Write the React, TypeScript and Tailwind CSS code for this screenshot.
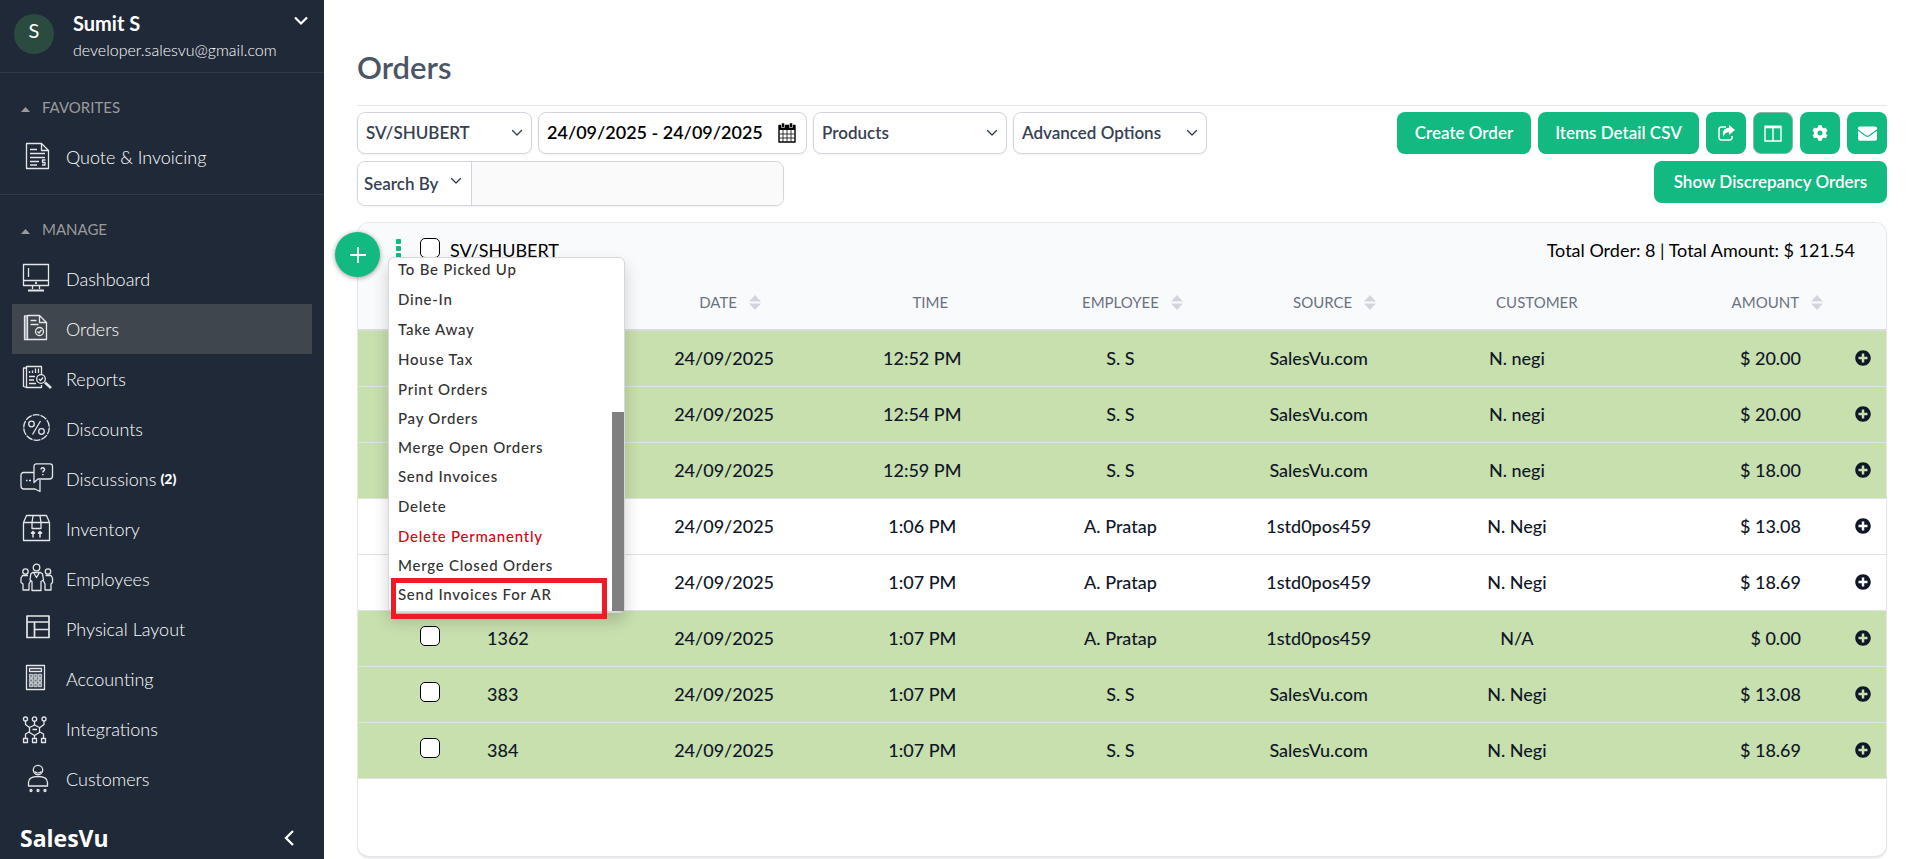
import { useState } from 'react';
import type { ReactNode } from 'react';
import clsx from 'clsx';
import { FaCog, FaEnvelope, FaPlusCircle } from 'react-icons/fa';

const icons: Record<string, ReactNode> = {
  quote: (
    <>
      <path d="M6.500 2.500h15l7 7v18h-22z M21.500 2.500v7h7" />
      <path d="M10 8.500h7M10 12.500h15M10 16.500h15M10 20.500h9M10 24h7" />
      <path d="M25.500 19h-3v2.500h2.500V24h-3" />
    </>
  ),
  dashboard: (
    <>
      <path d="M3.500 1.500h25v21h-25z M3.500 17.500h25 M8.500 5v9" />
      <path d="M12.500 23v3M19.500 23v3" />
      <path d="M8 27.500h16" strokeWidth="2" />
      <circle cx="16" cy="20" r=".5" />
    </>
  ),
  orders: (
    <>
      <path d="M7.500 2.500h12l7 7v17h-19z M19.500 2.500v7h7" />
      <path d="M7 3H4.500v23.500H8" />
      <path d="M6 4v22" stroke="#a3a8ad" strokeWidth="2" />
      <path d="M10.500 7.500h6M10.500 11.500h8" />
      <circle cx="19.500" cy="18.500" r="4" />
      <path d="M17.500 18.500l1.500 1.500 2.500-3" />
    </>
  ),
  reports: (
    <>
      <path d="M21.500 12V3.500h-15v21h15V22" />
      <path d="M6.500 5h-3v18.500l3 1" />
      <path d="M9.500 10V8M12.500 10V7.500M15.500 10V5.500M18.500 10V5.500" />
      <path d="M9 13.500h6M9 17h5M9 20.500h7" strokeWidth="1.600" />
      <circle cx="21" cy="16" r="4.300" />
      <path d="M19 16l1.500 1.500L23 14.500" />
      <path d="M25 19.500l6 5.500" strokeWidth="2.500" />
    </>
  ),
  discounts: (
    <>
      <circle cx="16.500" cy="14.500" r="12.800" strokeDasharray="7 1" />
      <circle cx="11.500" cy="11" r="2.800" />
      <circle cx="21.500" cy="18.500" r="2.800" />
      <path d="M20.500 8l-8 13.500" />
    </>
  ),
  discussions: (
    <>
      <path d="M16 .8h14a2.500 2.500 0 0 1 2.500 2.500V13a3 3 0 0 1-3 3H18l-4 3.500V3.300A2.500 2.500 0 0 1 16 .8z" />
      <path d="M14 9.500H3.500A2.500 2.500 0 0 0 1 12v11a3 3 0 0 0 3 3h11l5 2.500V17" />
      <path d="M6 17.500h1.500M9 17.500h2" />
      <path d="M21 6.500c.3-2.500 3.800-2 3.500.3-.2 1.200-1.700 1.200-1.700 2.700M22.800 11v1.200" strokeWidth="1.500" />
    </>
  ),
  inventory: (
    <>
      <path d="M3.500 9.500h26v18h-26z M3.500 9.500l3-7h20l3 7" />
      <path d="M13 3l-1 6.500V15.500h9V9.500L20 3" />
      <path d="M13 24.500v-6M11 20.500l2-2 2 2M20 24.500v-6M18 20.500l2-2 2 2" strokeWidth="1.500" />
    </>
  ),
  employees: (
    <>
      <circle cx="16.500" cy="4.500" r="3.300" />
      <circle cx="5.500" cy="8.500" r="2.700" />
      <circle cx="28" cy="8.500" r="2.700" />
      <path d="M12.500 9.500h8l2 1.500 1 6-2.500 1.500V27.500h-9V18.500L10 17l.8-6z M13.500 9.500l3 5 3-5" />
      <path d="M8 12.500H2.500L1 15v4.500L3 21v6h6v-6l2-4M25.500 12.500h5.500L32.500 15v4.500L31 21v6h-6v-6l-2-4" />
    </>
  ),
  layout: <path d="M7 3h22v21.500H7z M7 9h22M14.500 9v15.500M14.500 16.500H29" strokeWidth="1.700" />,
  accounting: (
    <>
      <path d="M6.500 2.500h18v24h-18z M9.500 5.500h12v3h-12z" />
      <path
        d="M9.500 11.500h3v3h-3zM14 11.500h3v3h-3zM18.500 11.500h3v3h-3zM9.500 16h3v3h-3zM14 16h3v3h-3zM18.500 16h3v3h-3zM9.500 20.500h3v3h-3zM14 20.500h3v3h-3zM18.500 20.500h3v3h-3z"
        stroke="#b9bec4"
        fill="#6d747d"
      />
    </>
  ),
  integrations: (
    <>
      <circle cx="5.500" cy="6" r="2" />
      <circle cx="14.500" cy="6" r="2.200" />
      <circle cx="24" cy="6" r="2" />
      <path d="M14.500 12l5 2.500v5l-5 3-5-3v-5z M12.500 16.500h4.500" />
      <path d="M5.500 8v3.500l4 3M24 8v3.500l-4 3M14.500 8v4M9 19l-3.500 2v4M20 19l3.500 2v4M14.500 22.500V25" />
      <path d="M3.500 25.500h4v4h-4zM12.500 25.500h4v4h-4zM21.500 25.500h4v4h-4z" />
    </>
  ),
  customers: (
    <>
      <circle cx="18" cy="7" r="4.700" />
      <path d="M14.500 8.500c2 1.800 5 1.800 7 0" />
      <path d="M8.500 23v-3.500c0-4 4-6 9.500-6s9.500 2 9.500 6V23z" />
      <circle cx="11" cy="27.500" r="1" />
      <circle cx="18" cy="27.500" r="1" />
      <circle cx="25" cy="27.500" r="1" />
    </>
  ),
};

const manageLinks = [
  { icon: 'dashboard', label: 'Dashboard' },
  { icon: 'orders', label: 'Orders', active: true },
  { icon: 'reports', label: 'Reports' },
  { icon: 'discounts', label: 'Discounts' },
  { icon: 'discussions', label: 'Discussions', count: 2 },
  { icon: 'inventory', label: 'Inventory' },
  { icon: 'employees', label: 'Employees' },
  { icon: 'layout', label: 'Physical Layout' },
  { icon: 'accounting', label: 'Accounting' },
  { icon: 'integrations', label: 'Integrations' },
  { icon: 'customers', label: 'Customers' },
];

const orders = [
  { id: '', time: '12:52 PM', employee: 'S. S', source: 'SalesVu.com', customer: 'N. negi', amount: '20.00', closed: true },
  { id: '', time: '12:54 PM', employee: 'S. S', source: 'SalesVu.com', customer: 'N. negi', amount: '20.00', closed: true },
  { id: '', time: '12:59 PM', employee: 'S. S', source: 'SalesVu.com', customer: 'N. negi', amount: '18.00', closed: true },
  { id: '', time: '1:06 PM', employee: 'A. Pratap', source: '1std0pos459', customer: 'N. Negi', amount: '13.08', closed: false },
  { id: '', time: '1:07 PM', employee: 'A. Pratap', source: '1std0pos459', customer: 'N. Negi', amount: '18.69', closed: false },
  { id: '1362', time: '1:07 PM', employee: 'A. Pratap', source: '1std0pos459', customer: 'N/A', amount: '0.00', closed: true },
  { id: '383', time: '1:07 PM', employee: 'S. S', source: 'SalesVu.com', customer: 'N. Negi', amount: '13.08', closed: true },
  { id: '384', time: '1:07 PM', employee: 'S. S', source: 'SalesVu.com', customer: 'N. Negi', amount: '18.69', closed: true },
];

const menuItems = [
  { label: 'To Be Picked Up', className: 'h-[30px]' },
  { label: 'Dine-In', className: 'h-[30px]' },
  { label: 'Take Away', className: 'h-[30px]' },
  { label: 'House Tax', className: 'h-[30px]' },
  { label: 'Print Orders', className: 'h-[30px]' },
  { label: 'Pay Orders', className: 'h-[29px]' },
  { label: 'Merge Open Orders', className: 'h-[29px]' },
  { label: 'Send Invoices', className: 'h-[29px]' },
  { label: 'Delete', className: 'h-[30px]' },
  { label: 'Delete Permanently', className: 'h-[30px] text-[#d40511]' },
  { label: 'Merge Closed Orders', className: 'h-[29px]' },
  { label: 'Send Invoices For AR', className: 'h-[29px]' },
];

function Chevron({ className }: { className?: string }) {
  return (
    <svg viewBox="0 0 12 8" className={className} fill="none" stroke="currentColor" strokeLinecap="round" strokeLinejoin="round">
      <path d="M1.500 1.500L6 6l4.500-4.500" strokeWidth="1.400" />
    </svg>
  );
}

function NavLink({ icon, label, active, count }: { icon: string; label: string; active?: boolean; count?: number }) {
  return (
    <li>
      <a href="#" className={clsx('mx-3 flex h-[50px] items-center pl-2 text-lg font-light text-white', active && 'bg-[#40464d]')}>
        <svg viewBox="0 0 34 32" className="mr-3 h-8 w-[34px]" fill="none" stroke="#e4e7ea" strokeWidth="1.300" strokeLinejoin="round">
          {icons[icon]}
        </svg>
        {label}
        {count && <b className="ml-1 text-sm font-black">({count})</b>}
      </a>
    </li>
  );
}

function NavHeading({ children }: { children: string }) {
  return (
    <button type="button" className="mb-[13px] flex h-6 items-center gap-3 pl-[21px] text-[15px] text-[#9b9b9b]">
      <svg viewBox="0 0 9 5" className="mt-1 h-[5px] w-[9px]" fill="currentColor">
        <path d="M0 5L4.500 0 9 5z" />
      </svg>
      {children}
    </button>
  );
}

function Sidebar() {
  return (
    <aside className="flex min-h-screen w-[324px] shrink-0 flex-col bg-[#202937]">
      <div className="flex h-[73px] border-b border-[#2f3b48] pl-3.5">
        <div className="mt-3.5 flex size-10 items-center justify-center rounded-full bg-[#2b4b41] pb-2 text-xl text-white">S</div>
        <div className="ml-[19px] flex-1 pt-[11px] text-white">
          <p className="text-xl leading-6 font-bold">Sumit S</p>
          <p className="pt-[3px] text-base leading-6 font-light">developer.salesvu@gmail.com</p>
        </div>
        <button type="button" aria-label="Account menu" className="mr-4 flex self-start pt-4 text-white">
          <svg viewBox="0 0 14 10" className="h-2.5 w-3.5" fill="none" stroke="currentColor" strokeWidth="2.200">
            <path d="M1 1.500l6 6 6-6" />
          </svg>
        </button>
      </div>
      <nav>
        <div className="border-b border-[#2f3b48] pt-[22px] pb-3">
          <NavHeading>FAVORITES</NavHeading>
          <ul>
            <NavLink icon="quote" label="Quote & Invoicing" />
          </ul>
        </div>
        <div className="pt-[22px]">
          <NavHeading>MANAGE</NavHeading>
          <ul>
            {manageLinks.map((l) => (
              <NavLink key={l.label} {...l} />
            ))}
          </ul>
        </div>
      </nav>
      <div className="mt-auto flex h-[42px] items-center justify-between pr-[30px] pl-5 text-white">
        <span className="font-['Open_Sans',sans-serif] text-[23px] font-bold">SalesVu</span>
        <button type="button" aria-label="Collapse sidebar">
          <svg viewBox="0 0 10 16" className="h-4 w-2.5" fill="none" stroke="currentColor" strokeWidth="2.300">
            <path d="M9 1L2 8l7 7" />
          </svg>
        </button>
      </div>
    </aside>
  );
}

function FilterSelect({ label, width }: { label: string; width: string }) {
  return (
    <div className={clsx('relative', width)}>
      <select
        aria-label={label}
        className="h-[42px] w-full appearance-none rounded-lg border border-gray-300 bg-white pr-8 pl-2 text-[17px] font-semibold text-gray-700 shadow-xs"
      >
        <option>{label}</option>
      </select>
      <Chevron className="pointer-events-none absolute top-[17px] right-[9px] h-2 w-3 text-gray-700" />
    </div>
  );
}

function Toolbar() {
  return (
    <div className="flex justify-between gap-4 pt-1.5">
      <div className="flex flex-col gap-[7px]">
        <div className="flex gap-1.5">
          <FilterSelect label="SV/SHUBERT" width="w-[175px]" />
          <label className="flex h-[42px] w-[269px] items-center gap-1 rounded-lg border border-gray-300 pr-2.5 pl-2 shadow-xs">
            <input
              aria-label="Date range"
              defaultValue="24/09/2025 - 24/09/2025"
              className="min-w-0 flex-1 pb-0.5 text-lg font-semibold text-black outline-none"
            />
            <svg viewBox="0 0 18 20" className="h-5 w-[18px]">
              <path d="M1 2.500h16V19H1z" fill="none" stroke="#000" strokeWidth="1.400" strokeLinejoin="round" />
              <path d="M1 2.500h16V7H1z" />
              <path d="M3.500 0h3v4.500h-3zM11.500 0h3v4.500h-3z" stroke="#fff" strokeWidth=".6" />
              <path d="M5 7v12M9 7v12M13 7v12M1 11h16M1 15h16" stroke="#222" strokeWidth=".9" />
            </svg>
          </label>
          <FilterSelect label="Products" width="w-[194px]" />
          <FilterSelect label="Advanced Options" width="w-[194px]" />
        </div>
        <div className="flex h-[45px] w-[427px] overflow-hidden rounded-lg border border-gray-300 shadow-xs">
          <div className="relative w-[114px] border-r border-gray-300">
            <select aria-label="Search by" className="h-full w-full appearance-none bg-white pl-1.5 text-[17px] font-semibold text-gray-700">
              <option>Search By</option>
            </select>
            <Chevron className="pointer-events-none absolute top-[15px] right-[9px] h-2 w-3 text-gray-700" />
          </div>
          <input aria-label="Search text" className="min-w-0 flex-1 bg-[#fafafa] px-2 outline-none" />
        </div>
      </div>

      <div className="flex flex-col items-end gap-[7px]">
        <div className="flex h-[42px] gap-[7px] text-white">
          <button type="button" className="w-[134px] rounded-lg bg-[#12b981] text-[17px] font-semibold">
            Create Order
          </button>
          <button type="button" className="w-[161px] rounded-lg bg-[#12b981] text-[17px] font-semibold">
            Items Detail CSV
          </button>
          <button type="button" aria-label="Share" className="flex w-10 items-center justify-center rounded-lg bg-[#12b981]">
            <svg viewBox="0 0 18 17" className="h-[17px] w-[18px]" fill="none" stroke="currentColor">
              <path d="M9 2H4.500A2.500 2.500 0 0 0 2 4.500v8A2.500 2.500 0 0 0 4.500 15h8a2.500 2.500 0 0 0 2.500-2.500V11" strokeWidth="1.500" />
              <path d="M12 0l6 5-6 5V7.200C9 7.200 7.500 8 6.800 12 4.500 7.500 6.500 3 12 2.800z" fill="currentColor" stroke="none" />
            </svg>
          </button>
          <button type="button" aria-label="Columns" className="flex w-10 items-center justify-center rounded-lg border border-[#8fb5a5] bg-[#12b981]">
            <svg viewBox="0 0 18 17" className="h-[17px] w-[18px]" fill="none" stroke="currentColor">
              <path d="M1 1.500h16v14.500H1z M9 2v14" strokeWidth="1.400" />
              <path d="M1 2h16" strokeWidth="2.600" />
            </svg>
          </button>
          <button type="button" aria-label="Settings" className="flex w-10 items-center justify-center rounded-lg bg-[#12b981]">
            <FaCog className="size-4" />
          </button>
          <button type="button" aria-label="Email" className="flex w-10 items-center justify-center rounded-lg bg-[#12b981]">
            <FaEnvelope className="size-[19px]" />
          </button>
        </div>
        <button type="button" className="h-[42px] w-[233px] rounded-lg bg-[#12b981] text-[17px] font-semibold text-white">
          Show Discrepancy Orders
        </button>
      </div>
    </div>
  );
}

function Column({ title, sortable, className }: { title: string; sortable?: boolean; className?: string }) {
  return (
    <th className={clsx('h-[52px] border-b-2 border-[#d9dbde] pb-1 font-normal', className)}>
      <span className="inline-flex items-center gap-3">
        {title}
        {sortable && (
          <svg viewBox="0 0 12 15" className="h-[15px] w-3 text-gray-300" fill="currentColor">
            <path d="M6 0l6 6.500H0zM6 15l6-6.500H0z" />
          </svg>
        )}
      </span>
    </th>
  );
}

function Checkbox({ label }: { label: string }) {
  return (
    <input
      type="checkbox"
      aria-label={label}
      className="block size-5 appearance-none rounded-[5px] border border-black bg-white checked:bg-[#12b981]"
    />
  );
}

function OrdersTable() {
  return (
    <table className="w-full table-fixed border-separate border-spacing-0 text-center">
      <colgroup>
        <col className="w-[129px]" />
        <col className="w-[138px]" />
        <col span={5} />
        <col className="w-[207px]" />
        <col className="w-[63px]" />
      </colgroup>
      <thead className="bg-[#f9fafc] text-[15px] text-gray-500">
        <tr>
          <Column title="" />
          <Column title="" />
          <Column title="DATE" sortable className="pl-3" />
          <Column title="TIME" className="pl-4" />
          <Column title="EMPLOYEE" sortable className="pl-6" />
          <Column title="SOURCE" sortable className="pl-8" />
          <Column title="CUSTOMER" className="pl-10" />
          <Column title="AMOUNT" sortable className="text-right" />
          <Column title="" />
        </tr>
      </thead>
      <tbody className="text-lg font-medium text-gray-900">
        {orders.map((o, i) => (
          <tr key={i} className={clsx('*:h-14 *:border-b *:border-[#dfe2e5] *:pb-0.5', o.closed ? 'bg-[#c8dfae]' : 'bg-white')}>
            <td className="pl-[62px]">
              <div className="pb-1">
                <Checkbox label={`Select order ${i + 1}`} />
              </div>
            </td>
            <td className="text-left">{o.id}</td>
            <td>24/09/2025</td>
            <td>{o.time}</td>
            <td>{o.employee}</td>
            <td>{o.source}</td>
            <td>{o.customer}</td>
            <td className="pr-[22px] text-right">$ {o.amount}</td>
            <td className="pl-4">
              <button type="button" aria-label={`Expand order ${i + 1}`} className="block w-full">
                <FaPlusCircle className="mx-auto size-4" />
              </button>
            </td>
          </tr>
        ))}
      </tbody>
    </table>
  );
}

function ActionsMenu() {
  return (
    <div className="absolute top-[35px] left-[31px] w-[237px] rounded-md border border-b-2 border-[#d5d7da] bg-white shadow-[0_8px_16px_rgba(0,0,0,0.18)]">
      <ul className="-mt-0.5">
        {menuItems.map((item) => (
          <li key={item.label}>
            <button
              type="button"
              className={clsx('flex w-full items-center pb-1 pl-[9px] text-left text-[15px] font-medium tracking-wider text-[#333]', item.className)}
            >
              {item.label}
            </button>
          </li>
        ))}
      </ul>
      <div className="absolute right-0 bottom-0 h-[199px] w-3 bg-[#808080]" />
      <div className="pointer-events-none absolute -bottom-2 left-0.5 h-[41px] w-[216px] border-[5px] border-[#ed1c24]" />
    </div>
  );
}

export default function App() {
  const [menuOpen, setMenuOpen] = useState(true);

  return (
    <div className="flex min-h-screen bg-white font-[Lato,'Open_Sans',sans-serif]">
      <Sidebar />
      <main className="flex min-w-0 flex-1 flex-col pr-8 pl-[33px]">
        <h1 className="border-b border-[#e3e5e8] pt-[43px] pb-3.5 text-[31px] leading-[48px] font-semibold text-gray-600">Orders</h1>
        <Toolbar />
        <div className="relative mt-4 mb-px flex flex-1 flex-col">
          <section className="flex-1 overflow-hidden rounded-xl border border-b-2 border-gray-200 bg-white shadow-xs">
            <div className="flex h-14 items-center bg-[#f9fafc] pr-[31px] pb-0.5 pl-[38px] text-lg text-black">
              <button type="button" aria-label="Order actions" onClick={() => setMenuOpen(!menuOpen)} className="mb-1 flex flex-col gap-0.5 text-[#12b981]">
                <span className="size-[5px] rounded-[1px] bg-current" />
                <span className="size-[5px] rounded-[1px] bg-current" />
                <span className="size-[5px] rounded-[1px] bg-current" />
              </button>
              <label className="ml-[19px] flex items-center gap-2.5">
                <span className="pb-1">
                  <Checkbox label="Select all SV/SHUBERT orders" />
                </span>
                SV/SHUBERT
              </label>
              <p className="ml-auto">Total Order: 8 | Total Amount: $ 121.54</p>
            </div>
            <OrdersTable />
          </section>
          <button
            type="button"
            aria-label="Add order"
            className="absolute top-2.5 -left-[22px] flex size-[45px] items-center justify-center rounded-full bg-[#12b981] text-white shadow-[0_1px_5px_rgba(0,0,0,0.4)]"
          >
            <svg viewBox="0 0 16 16" className="size-4" fill="none" stroke="currentColor" strokeWidth="1.800">
              <path d="M8 0v16M0 8h16" />
            </svg>
          </button>
          {menuOpen && <ActionsMenu />}
        </div>
      </main>
    </div>
  );
}
